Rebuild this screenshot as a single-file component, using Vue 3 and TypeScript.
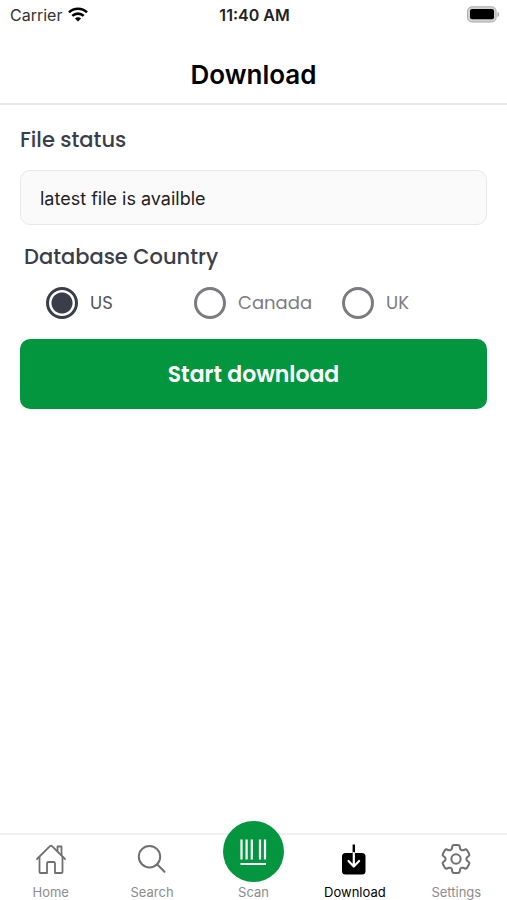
<script setup lang="ts">
import { ref } from 'vue'

interface Tab {
  id: string
  label: string
}

const status = ref('latest file is availble')
const countries: string[] = ['US', 'Canada', 'UK']
const country = ref('US')

const tabs: Tab[] = [
  { id: 'home', label: 'Home' },
  { id: 'search', label: 'Search' },
  { id: 'scan', label: 'Scan' },
  { id: 'download', label: 'Download' },
  { id: 'settings', label: 'Settings' },
]
const activeTab = ref('download')
</script>

<template>
  <div class="screen">
    <div class="status-bar">
      <div class="carrier">
        <span>Carrier</span>
        <svg class="wifi" viewBox="0 0 20 15" aria-hidden="true">
          <g fill="none" stroke="#000" stroke-width="2.6">
            <path d="M1 5.4a13 13 0 0 1 18 0" />
            <path d="M4.3 8.9a8.2 8.2 0 0 1 11.4 0" />
          </g>
          <path d="M10 14.6l-3.1-3.1a4.4 4.4 0 0 1 6.2 0z" />
        </svg>
      </div>
      <span class="time">11:40 AM</span>
      <svg class="battery" viewBox="0 0 33 17" aria-hidden="true">
        <rect x="1.5" y=".8" width="28.6" height="15.2" rx="4.4" fill="#d2d2d2" stroke="#aaa" />
        <rect x="4" y="3" width="24" height="10.2" rx="2" fill="#000" />
        <path d="M31.500 6v5q2-.8 2-2.500T31.500 6z" fill="#aaa" />
      </svg>
    </div>

    <header class="title-bar">
      <h1>Download</h1>
    </header>

    <main>
      <label class="heading" for="file-status">File status</label>
      <input id="file-status" class="status-field" type="text" :value="status" readonly />

      <fieldset>
        <legend class="heading">Database Country</legend>
        <div class="options">
          <label v-for="c in countries" :key="c" class="option" :class="{ selected: c === country }">
            <input v-model="country" type="radio" name="country" :value="c" />
            <span>{{ c }}</span>
          </label>
        </div>
      </fieldset>

      <button class="start" type="button">Start download</button>
    </main>

    <nav>
      <a
        v-for="tab in tabs"
        :key="tab.id"
        :href="'#' + tab.id"
        class="tab"
        :class="{ active: tab.id === activeTab }"
        @click.prevent="activeTab = tab.id"
      >
        <svg v-if="tab.id === 'home'" class="icon" viewBox="0 0 36 36" aria-hidden="true">
          <g fill="none" stroke="currentColor" stroke-width="1.8" stroke-linejoin="round" stroke-linecap="round">
            <path d="M4 18L17 5.200q1-.9 2 0L32 18" />
            <path d="M6.500 16v15q0 1 1 1h6.500V22.500q0-1.500 1.500-1.500h5q1.500 0 1.500 1.500V32h6.500q1 0 1-1V16" />
            <path d="M24.500 10V5.500H28.500V14" />
          </g>
        </svg>
        <svg v-else-if="tab.id === 'search'" class="icon" viewBox="0 0 36 36" aria-hidden="true">
          <g fill="none" stroke="currentColor" stroke-width="2" stroke-linecap="round">
            <circle cx="15.500" cy="15.700" r="10.700" />
            <path d="M23.300 23.500L30.500 30.700" />
          </g>
        </svg>
        <span v-else-if="tab.id === 'scan'" class="scan">
          <svg viewBox="0 0 30 30" aria-hidden="true">
            <path
              d="M3.500 2.500v20M8.600 2.500v20M13.800 2.500v20M22 2.500v20M27 2.500v20M2.500 27h25.500"
              fill="none"
              stroke="#fff"
              stroke-width="2.200"
            />
          </svg>
        </span>
        <svg v-else-if="tab.id === 'download'" class="icon" viewBox="0 0 36 36" aria-hidden="true">
          <rect x="5" y="12" width="23.500" height="21.500" rx="3.500" fill="currentColor" />
          <path d="M16.800 3.500v9" fill="none" stroke="currentColor" stroke-width="2.400" />
          <path
            d="M16.800 12v13M11.500 20L16.800 25.500 22.100 20"
            fill="none"
            stroke="#fff"
            stroke-width="2.200"
            stroke-linecap="round"
            stroke-linejoin="round"
          />
        </svg>
        <svg v-else class="icon" viewBox=".4 .4 23.2 23.2" aria-hidden="true">
          <g fill="none" stroke="currentColor" stroke-width="1.3" stroke-linejoin="round">
            <path
              d="M9.594 3.94c.09-.542.56-.94 1.11-.94h2.593c.55 0 1.02.398 1.11.94l.213 1.281c.063.374.313.686.645.87.074.04.147.083.22.127.325.196.72.257 1.075.124l1.217-.456a1.125 1.125 0 0 1 1.37.49l1.296 2.247a1.125 1.125 0 0 1-.26 1.431l-1.003.827c-.293.241-.438.613-.43.992a7.723 7.723 0 0 1 0 .255c-.008.378.137.75.43.991l1.004.827c.424.35.534.955.26 1.43l-1.298 2.247a1.125 1.125 0 0 1-1.369.491l-1.217-.456c-.355-.133-.75-.072-1.076.124a6.47 6.47 0 0 1-.22.128c-.331.183-.581.495-.644.869l-.213 1.281c-.09.543-.56.94-1.11.94h-2.594c-.55 0-1.019-.398-1.11-.94l-.213-1.281c-.062-.374-.312-.686-.644-.87a6.52 6.52 0 0 1-.22-.127c-.325-.196-.72-.257-1.076-.124l-1.217.456a1.125 1.125 0 0 1-1.369-.49l-1.297-2.247a1.125 1.125 0 0 1 .26-1.431l1.004-.827c.292-.24.437-.613.43-.991a6.932 6.932 0 0 1 0-.255c.007-.38-.138-.751-.43-.992l-1.004-.827a1.125 1.125 0 0 1-.26-1.43l1.297-2.247a1.125 1.125 0 0 1 1.37-.491l1.216.456c.356.133.751.072 1.076-.124.072-.044.146-.086.22-.128.332-.183.582-.495.644-.869l.214-1.28Z"
            />
            <circle cx="12" cy="12" r="3" />
          </g>
        </svg>
        <span class="tab-label">{{ tab.label }}</span>
      </a>
    </nav>
  </div>
</template>

<style>
body {
  background: #fff;
}
</style>

<style scoped>
* {
  box-sizing: border-box;
}

.screen {
  display: flex;
  flex-direction: column;
  min-height: 100vh;
  font-family: Inter, Roboto, sans-serif;
  color: #000;
}

.status-bar {
  display: grid;
  grid-template-columns: 1fr auto 1fr;
  align-items: center;
  height: 29px;
  padding: 0 8px 0 10px;
  font-size: 16px;
  line-height: 20px;
}

.carrier {
  display: flex;
  align-items: center;
  gap: 6px;
  color: #333;
}

.wifi {
  width: 20px;
  height: 15px;
}

.time {
  font-weight: 600;
  color: #222;
}

.battery {
  justify-self: end;
  width: 33px;
  height: 17px;
}

.title-bar {
  height: 76px;
  padding-top: 30px;
  border-bottom: 2px solid #e6e6e6;
  text-align: center;
}

h1 {
  margin: 0;
  font-size: 26px;
  line-height: 32px;
  font-weight: 600;
}

main {
  display: flex;
  flex-direction: column;
  flex: 1;
  padding: 19px 20px;
}

.heading {
  padding: 0;
  font-family: Poppins, Inter, sans-serif;
  font-size: 21px;
  line-height: 32px;
  font-weight: 500;
  color: #3b3e4a;
}

.status-field {
  height: 55px;
  margin-top: 14px;
  padding: 2px 19px 0;
  border: 1px solid #e8e8e8;
  border-radius: 10px;
  background: #fafafa;
  font: inherit;
  font-size: 18px;
  color: #222;
}

fieldset {
  min-width: 0;
  margin: 16px 0 0;
  padding: 0 0 0 4px;
  border: 0;
}

.options {
  display: grid;
  grid-template-columns: 148px 148px 1fr;
  padding: 13px 0 0 22px;
}

.option {
  display: flex;
  align-items: center;
  gap: 12px;
  font-family: Poppins, Inter, sans-serif;
  font-size: 18px;
  line-height: 32px;
  color: #7b7c80;
}

.option span {
  padding-top: 1px;
}

.option.selected {
  color: #55565c;
}

.option input {
  appearance: none;
  flex: none;
  width: 32px;
  height: 32px;
  margin: 0;
  border: 3px solid #7b7c80;
  border-radius: 50%;
  background: #fff;
}

.option input:checked {
  border-color: #3b3e4a;
  background: radial-gradient(circle, #3b3e4a 10px, #fff 11px);
}

.start {
  height: 70px;
  margin-top: 20px;
  border: 0;
  border-radius: 10px;
  background: #03963f;
  font-family: Poppins, Inter, sans-serif;
  font-size: 22px;
  font-weight: 600;
  color: #fff;
}

nav {
  display: grid;
  grid-template-columns: repeat(5, 1fr);
  grid-template-rows: 65px;
  border-top: 2px solid #f0f0f0;
}

.tab {
  display: flex;
  flex-direction: column;
  align-items: center;
  justify-content: flex-end;
  color: #8c8c8c;
  text-decoration: none;
}

.tab.active {
  color: #000;
}

.icon {
  flex: none;
  width: 36px;
  height: 36px;
  margin-bottom: 7px;
  color: #707070;
}

.active .icon {
  color: #000;
}

.scan {
  display: flex;
  flex: none;
  align-items: center;
  justify-content: center;
  width: 61px;
  height: 61px;
  margin-bottom: 2px;
  border-radius: 50%;
  background: #03963f;
}

.scan svg {
  width: 30px;
  height: 30px;
}

.tab-label {
  font-size: 13px;
  line-height: 16px;
}
</style>
